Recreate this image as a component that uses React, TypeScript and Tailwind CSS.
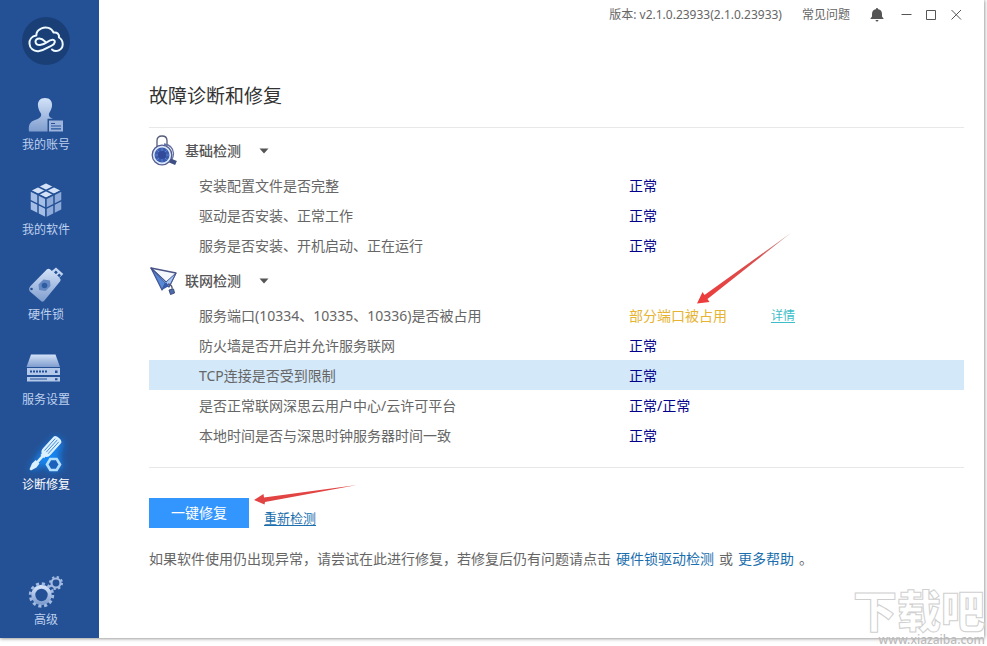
import React, { useState } from 'react';

type Check = { name: string; status: string; warn?: boolean; active?: boolean };

const basicChecks: Check[] = [
  { name: '安装配置文件是否完整', status: '正常' },
  { name: '驱动是否安装、正常工作', status: '正常' },
  { name: '服务是否安装、开机启动、正在运行', status: '正常' },
];

const networkChecks: Check[] = [
  { name: '服务端口(10334、10335、10336)是否被占用', status: '部分端口被占用', warn: true },
  { name: '防火墙是否开启并允许服务联网', status: '正常' },
  { name: 'TCP连接是否受到限制', status: '正常', active: true },
  { name: '是否正常联网深思云用户中心/云许可平台', status: '正常/正常' },
  { name: '本地时间是否与深思时钟服务器时间一致', status: '正常' },
];

/* --- SIDEBAR ICONS --- */

const Logo = () => (
  <svg viewBox="0 0 48 48" className="size-12" fill="none">
    <circle cx="24" cy="24" r="24" fill="#1a3f77" />
    <path
      d="M30 32.5C34 36 40.5 33 40.7 27.5C40.8 24 39.3 21.8 37 20.5C37.4 17 35 15 31.6 15.6C29.5 10.8 24 9.3 19.5 11.3C16 12.8 14.2 15.5 14.3 18.6C9.8 19.3 7.2 22.5 7.5 26.7C7.8 31.4 11.6 34.6 16.3 34.2C22.5 33.7 24.8 30.5 29.6 28.6C33.2 27.1 34 23.2 30.8 22.8C26.5 22.4 23.5 28 18 28C12.2 28 12 21.4 17.4 21.4C20 21.4 21.6 23 23.2 24.6"
      stroke="#eefaff"
      strokeWidth="2"
      strokeLinecap="round"
      strokeLinejoin="round"
    />
  </svg>
);

const AccountIcon = () => (
  <svg viewBox="0 0 40 40" className="size-10">
    <defs>
      <linearGradient id="steel" x1="0" y1="0" x2="0" y2="1">
        <stop offset="0" stopColor="#d3e2f8" />
        <stop offset="1" stopColor="#7f9dce" />
      </linearGradient>
    </defs>
    <path
      d="M19 3C24 3 26.500 6.500 26 11C25.700 14.500 24 16.500 23 18.500C22.500 21 23.500 22.500 27 23.800H21.500V36.500H3C2 30.500 4 26.500 9 25C13 23.700 16 22 15 18.500C13.700 16.500 12.300 14.500 12 11C11.500 6.500 14 3 19 3Z"
      fill="url(#steel)"
    />
    <path d="M23 25.500H37V36.500H23Z" fill="#9db5dd" />
    <path d="M25 28.500H29M25 31H35M25 33.800H35" stroke="#24539a" strokeWidth="1.200" />
  </svg>
);

const CubeIcon = () => (
  <svg viewBox="0 0 40 40" className="size-10" stroke="#245196" strokeWidth="1.500" strokeLinejoin="round">
    <path d="M20 2.500L36 10.500L20 18.500L4 10.500Z" fill="#d3e2f7" />
    <path d="M4 10.500L20 18.500V38L4 30Z" fill="#a5bee5" />
    <path d="M36 10.500L20 18.500V38L36 30Z" fill="#8eaad8" />
    <path d="M12 6.500L28 14.500V34M28 6.500L12 14.500V34M4 20.300L20 28.300L36 20.300" fill="none" />
  </svg>
);

const DongleIcon = () => (
  <svg viewBox="0 0 40 40" className="size-10">
    <path d="M30 2.500L37.300 9L32 14L24.500 7Z" fill="#c3d5f1" />
    <path d="M29.800 5.500L31.800 7.300L30 9.200L28 7.400ZM33.200 8.600L35 10.300L33.200 12.200L31.200 10.400Z" fill="#245196" />
    <path
      d="M21 4.300Q22.500 3 24 4.300L34 13.500Q35.300 14.800 34.200 16.200L18 36Q16.500 37.500 15 36L4 26.500Q2.800 25 3.300 23.300Q3.500 22 5 20.500Z"
      fill="url(#steel)"
    />
    <path d="M17.500 14.500L24 15.500L24.500 21L19.500 26L13 25L12.500 19.500Z" fill="#6488c2" />
    <circle cx="18.500" cy="20.500" r="2.800" fill="#2f5da2" />
    <circle cx="5.500" cy="24" r="1.300" fill="#245196" />
  </svg>
);

const ServerIcon = () => (
  <svg viewBox="0 0 40 40" className="size-10">
    <path d="M5 4.500H29.500L34 17H0.500Z" fill="url(#steel)" />
    <path d="M1 18H34V25H1ZM1 27H34V31.500H1Z" fill="#b4c9ea" />
    <path d="M4 21.500H21" stroke="#245196" strokeWidth="2" strokeDasharray="2 1" />
    <path d="M4 29H21" stroke="#245196" strokeWidth="1" />
    <path d="M29 20.500H31.500V23H29ZM29 28.200H31.500V30.200H29Z" fill="#245196" />
  </svg>
);

const RepairIcon = () => (
  <svg viewBox="0 0 40 40" className="size-10 overflow-visible">
    <defs>
      <filter id="glow" x="-50%" y="-50%" width="200%" height="200%">
        <feGaussianBlur stdDeviation="3.500" />
      </filter>
    </defs>
    <path d="M3 36L14 18L30 2L37 8L33 20L36 32L26 37L20 30Z" fill="#1686f3" filter="url(#glow)" />
    <g transform="translate(33 3) rotate(42)">
      <path
        d="M-5 3Q-5 0 0 0Q5 0 5 3V18Q5 22 2.500 23V25H1.300V32H2.500L3 37L1 43H-1L-3 37L-2.500 32H-1.300V25H-2.500V23Q-5 22 -5 18Z"
        fill="#dbf1ff"
      />
      <path d="M-2.400 3V19M0 2.500V19M2.400 3V19" stroke="#3d86d6" strokeWidth="0.900" />
    </g>
    <path d="M24.300 24H30.700L34 29.500L30.700 35H24.300L21 29.500Z" fill="#1c62bd" stroke="#b4e0ff" strokeWidth="2.600" />
  </svg>
);

const GearsIcon = () => (
  <svg viewBox="0 0 40 40" className="size-10" fill="none">
    <circle cx="15.500" cy="25" r="8.200" stroke="url(#steel)" strokeWidth="4" />
    <circle cx="15.500" cy="25" r="11.200" stroke="#a2bae1" strokeWidth="3" strokeDasharray="3.100 2.764" />
    <circle cx="30" cy="13" r="4.500" stroke="#a2bae1" strokeWidth="2.200" />
    <circle cx="30" cy="13" r="6" stroke="#a2bae1" strokeWidth="2" strokeDasharray="2.300 2.412" />
  </svg>
);

const navItems = [
  { label: '我的账号', icon: <AccountIcon /> },
  { label: '我的软件', icon: <CubeIcon /> },
  { label: '硬件锁', icon: <DongleIcon /> },
  { label: '服务设置', icon: <ServerIcon /> },
  { label: '诊断修复', icon: <RepairIcon />, active: true },
];

const NavButton = ({ label, icon, active }: { label: string; icon: React.ReactNode; active?: boolean }) => (
  <button
    type="button"
    className={`flex flex-col items-center text-xs leading-5 ${active ? 'text-white' : 'text-[#bdd0ee]'}`}
  >
    {icon}
    {label}
  </button>
);

/* --- SECTION ICONS --- */

const LockSearchIcon = () => (
  <svg viewBox="0 0 30 32" className="h-8 w-[30px]" fill="none">
    <path d="M8 13V5.500Q8 1 13 1Q18 1 18 5.500V11" stroke="#555b78" strokeWidth="1.300" />
    <path d="M15 9Q24 10 24.500 18.500Q24.500 22 22.500 25" stroke="#6270a3" strokeWidth="1.300" />
    <circle cx="13" cy="20" r="9.800" fill="#dce8fa" stroke="#535d8e" strokeWidth="1.300" />
    <circle cx="13" cy="20" r="7.500" fill="#3a5daf" />
    <path d="M13 13V27M6 20H20M8 15L18 25M18 15L8 25" stroke="#6f91d5" strokeWidth="0.700" />
    <circle cx="13" cy="20" r="4" fill="#33499a" />
    <path d="M21 25.500L27 28" stroke="#3e4f83" strokeWidth="4.500" />
  </svg>
);

const PlaneIcon = () => (
  <svg viewBox="0 0 30 32" className="h-8 w-[30px]" strokeLinejoin="round">
    <path d="M2 3L27 8L20 22L14 18Z" fill="#f4f8fe" stroke="#4b5484" strokeWidth="1.300" />
    <path d="M2 3L17 17L13 25Z" fill="#5789d8" stroke="#43538f" strokeWidth="1.200" />
    <path d="M2 3L20 22L27 8L17 17Z" fill="#a8c9f5" stroke="#43538f" strokeWidth="1" />
    <path d="M13 25L17 17L20 21Z" fill="#345aab" />
    <path d="M19 19Q24 20 23 25" fill="none" stroke="#555b78" strokeWidth="1.300" />
    <path d="M20 25L24.500 24L25.500 28L21.500 29.500Z" fill="#4d6ba9" stroke="#3d4e80" />
  </svg>
);

const Section = ({ title, icon, checks }: { title: string; icon: React.ReactNode; checks: Check[] }) => {
  const [open, setOpen] = useState(true);

  return (
    <section>
      <h2>
        <button
          type="button"
          aria-expanded={open}
          onClick={() => setOpen(!open)}
          className="flex h-10 items-center pt-0.5 text-sm font-medium text-[#555]"
        >
          {icon}
          <span className="ml-1.5">{title}</span>
          <svg viewBox="0 0 10 6" className="ml-[18px] h-1.5 w-2.5" fill="#555">
            <path d="M0.500 0.500H9.500L5 5.500Z" />
          </svg>
        </button>
      </h2>
      {open && (
        <table className="w-full table-fixed text-left text-sm">
          <tbody>
            {checks.map((check) => (
              <tr key={check.name} className={`h-[30px] ${check.active ? 'bg-[#d3e8f9]' : ''}`}>
                <th scope="row" className="w-[480px] p-0 pt-0.5 pl-[50px] font-normal">
                  {check.name}
                </th>
                <td className={`w-[142px] p-0 pt-0.5 ${check.warn ? 'text-[#e6b432]' : 'text-[#00008b]'}`}>
                  {check.status}
                </td>
                <td className="p-0 pt-0.5 text-xs">
                  {check.warn && (
                    <a href="#details" className="text-[#3dbdc9] underline underline-offset-2">
                      详情
                    </a>
                  )}
                </td>
              </tr>
            ))}
          </tbody>
        </table>
      )}
    </section>
  );
};

const TitleBar = () => (
  <header className="flex h-[30px] items-center justify-end pr-[15px] text-xs text-[#666]">
    <span>版本: v2.1.0.23933(2.1.0.23933)</span>
    <a href="#faq" className="ml-5">常见问题</a>
    <button type="button" aria-label="通知" className="mr-2.5 ml-5">
      <svg viewBox="0 0 14 14" className="size-3.5" fill="#555">
        <path d="M7 0Q8 0 8.200 1.200Q12 2 12 6V8.500L13.500 10.500V11H0.500V10.500L2 8.500V6Q2 2 5.800 1.200Q6 0 7 0ZM5.500 12H8.500Q8.300 13.500 7 13.500Q5.700 13.500 5.500 12Z" />
      </svg>
    </button>
    <button type="button" aria-label="最小化" className="flex w-[25px] justify-center">
      <svg viewBox="0 0 11 11" className="size-[11px]" stroke="#555">
        <path d="M0.500 4.500H10.500" />
      </svg>
    </button>
    <button type="button" aria-label="最大化" className="flex w-[25px] justify-center">
      <svg viewBox="0 0 11 11" className="size-[11px]" stroke="#555" fill="none">
        <path d="M0.500 0.500H9.500V9.500H0.500Z" />
      </svg>
    </button>
    <button type="button" aria-label="关闭" className="flex w-[25px] justify-center">
      <svg viewBox="0 0 11 11" className="size-[11px]" stroke="#555">
        <path d="M0.500 0L10 9.500M10 0L0.500 9.500" />
      </svg>
    </button>
  </header>
);

/* --- RED POINTERS --- */

const Pointers = () => (
  <>
    <svg viewBox="0 0 96 72" className="pointer-events-none absolute top-[232px] left-[597px] h-[72px] w-24">
      <defs>
        <linearGradient id="fade" x1="0" y1="1" x2="1" y2="0">
          <stop offset="0" stopColor="#ee3b3b" />
          <stop offset="0.650" stopColor="#d9504f" />
          <stop offset="1" stopColor="#c9a5a5" />
        </linearGradient>
      </defs>
      <path d="M1 71.500L6.500 60L8.500 63L95.500 0.500L11.500 67L13.500 70Z" fill="url(#fade)" />
    </svg>
    <svg viewBox="0 0 106 22" className="pointer-events-none absolute top-[484px] left-[154px] h-[22px] w-[106px]">
      <path d="M1 16L10.500 10L11 13.500L104 1L12 18L11.500 20.500Z" fill="#e24444" />
    </svg>
  </>
);

const App = () => {
  return (
    <div className="relative flex min-h-screen bg-white pr-[3px] pb-2 font-['Noto_Sans','Noto_Sans_CJK_SC',sans-serif] text-[#666]">
      <div className="flex flex-1 bg-white shadow-[0_0_4px_rgba(0,0,0,0.6)]">
        {/* --- SIDEBAR --- */}
        <nav className="flex w-[99px] shrink-0 flex-col items-center bg-[#245196] pt-[17px] pr-[7px] pb-2">
          <Logo />
          <div className="mt-[30px] flex flex-col gap-[25px]">
            {navItems.map((item) => (
              <NavButton key={item.label} {...item} />
            ))}
          </div>
          <div className="mt-auto">
            <NavButton label="高级" icon={<GearsIcon />} />
          </div>
        </nav>

        {/* --- MAIN --- */}
        <main className="relative min-w-0 flex-1">
          <TitleBar />

          <div className="pt-[51px] pr-5 pl-[50px]">
            <h1 className="text-[19px] leading-[30px] text-[#333]">故障诊断和修复</h1>

            <div className="mt-4 border-y border-[#e8e8e8] pt-0.5 pb-[17px]">
              <Section title="基础检测" icon={<LockSearchIcon />} checks={basicChecks} />
              <Section title="联网检测" icon={<PlaneIcon />} checks={networkChecks} />
            </div>

            <div className="mt-[30px] flex items-end gap-[15px]">
              <button type="button" className="h-[30px] w-[100px] bg-[#3396ff] text-sm text-white">
                一键修复
              </button>
              <a href="#recheck" className="text-[13px] leading-5 text-[#1b6fae] underline underline-offset-2">
                重新检测
              </a>
            </div>

            <p className="mt-[19px] text-sm leading-6">
              如果软件使用仍出现异常，请尝试在此进行修复，若修复后仍有问题请点击
              <a href="#driver" className="mx-[5px] text-[#1b6fae]">硬件锁驱动检测</a>
              或
              <a href="#help" className="mx-[5px] text-[#1b6fae]">更多帮助</a>
              。
            </p>
          </div>

          <Pointers />
        </main>
      </div>

      {/* --- WATERMARK --- */}
      <div className="pointer-events-none absolute right-0.5 bottom-0 flex flex-col items-end text-white select-none">
        <span className="text-[44px] leading-[46px] font-black [-webkit-text-stroke:1px_#cfcfcf]">下载吧</span>
        <span className="text-xs leading-3 font-medium text-[#bbb]">www.xiazaiba.com</span>
      </div>
    </div>
  );
};

export default App;
